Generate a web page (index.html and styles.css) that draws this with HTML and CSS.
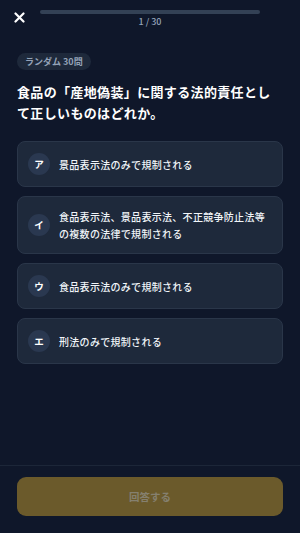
FILE: index.html
```html
<!DOCTYPE html>
<html lang="ja">
<head>
  <meta charset="UTF-8">
  <meta name="viewport" content="width=device-width, initial-scale=1.0">
  <title>クイズ</title>
  <link rel="stylesheet" href="styles.css">
</head>
<body>
  <div class="screen">
    <header class="top-bar">
      <button class="close-btn" aria-label="閉じる">
        <svg width="11" height="11" viewBox="0 0 11 11">
          <path d="M1.5 1.5 L9.5 9.5 M9.5 1.5 L1.5 9.5" stroke="#fff" stroke-width="2.2" stroke-linecap="round"/>
        </svg>
      </button>
      <div class="progress">
        <div class="progress-track"></div>
        <div class="progress-count">1 / 30</div>
      </div>
    </header>

    <main class="quiz">
      <span class="tag">ランダム 30問</span>
      <h1 class="question">食品の「産地偽装」に関する法的責任として正しいものはどれか。</h1>

      <div class="options">
        <div class="option">
          <span class="badge">ア</span>
          <span class="option-text">景品表示法のみで規制される</span>
        </div>
        <div class="option">
          <span class="badge">イ</span>
          <span class="option-text">食品表示法、景品表示法、不正競争防止法等の複数の法律で規制される</span>
        </div>
        <div class="option">
          <span class="badge">ウ</span>
          <span class="option-text">食品表示法のみで規制される</span>
        </div>
        <div class="option">
          <span class="badge">エ</span>
          <span class="option-text">刑法のみで規制される</span>
        </div>
      </div>
    </main>

    <footer class="answer-bar">
      <button class="answer-btn" disabled>回答する</button>
    </footer>
  </div>
</body>
</html>
```

FILE: styles.css
```css
/* Base */
body {
  margin: 0;
  background: #0f172a;
  color: #fff;
  font-family: "Noto Sans CJK JP", "Noto Sans", sans-serif;
}

.screen {
  height: 533px;
  display: flex;
  flex-direction: column;
}

/* Header */
.top-bar {
  display: flex;
  align-items: flex-start;
  padding: 10px 40px 0 14px;
}

.close-btn {
  width: 26px;
  padding: 2px 0 0;
  margin: 0;
  border: none;
  background: none;
  text-align: left;
  line-height: 0;
}

.progress {
  flex: 1;
  display: flex;
  flex-direction: column;
  align-items: center;
}

.progress-track {
  width: 100%;
  height: 4px;
  border-radius: 2px;
  background: #334155;
}

.progress-count {
  margin-top: 1px;
  font-size: 9px;
  line-height: 13px;
  color: #94a3b8;
  font-weight: 500;
}

/* Question */
.quiz {
  flex: 1;
  padding: 0 17px;
}

.tag {
  display: inline-block;
  margin-top: 25px;
  padding: 0 8px;
  height: 17px;
  line-height: 17px;
  border-radius: 9px;
  background: #1e293b;
  color: #94a3b8;
  font-size: 9px;
  font-weight: 700;
}

.question {
  margin: 11px 0 18px;
  font-size: 13px;
  line-height: 21px;
  letter-spacing: 0.35px;
  font-weight: 700;
}

/* Options */
.options {
  display: flex;
  flex-direction: column;
  gap: 9px;
}

.option {
  display: flex;
  align-items: center;
  gap: 9px;
  padding: 11px 12px 11px 10px;
  border: 1px solid #2a3649;
  border-radius: 8px;
  background: #1e293b;
  min-height: 22px;
}

.badge {
  flex: none;
  width: 22px;
  height: 22px;
  line-height: 22px;
  border-radius: 50%;
  background: #2a3850;
  text-align: center;
  font-size: 9.5px;
  font-weight: 700;
}

.option-text {
  font-size: 10px;
  letter-spacing: 0.3px;
  line-height: 17px;
  font-weight: 500;
  color: #f1f5f9;
}

/* Answer button */
.answer-bar {
  border-top: 1px solid #1c2638;
  padding: 11px 17px 17px;
}

.answer-btn {
  width: 100%;
  height: 39px;
  border: none;
  border-radius: 9px;
  background: #6b5a2b;
  color: #85806f;
  font-family: inherit;
  font-size: 10.5px;
  font-weight: 700;
}
```
